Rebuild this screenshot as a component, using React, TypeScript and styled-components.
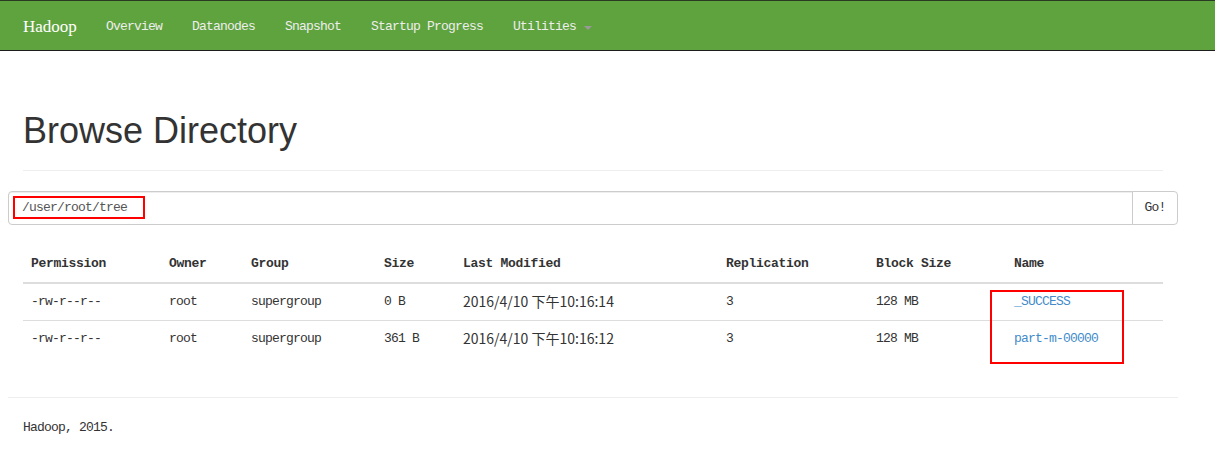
import styled, { createGlobalStyle } from "styled-components";

const mono = '"Liberation Mono", "DejaVu Sans Mono", monospace';
const cjk = '"Noto Sans CJK SC", "Noto Sans", sans-serif';

const GlobalStyle = createGlobalStyle`
    html, body {
        margin: 0;
        padding: 0;
        background: #fff;
    }
    body {
        font-family: ${mono};
        font-size: 13px;
        letter-spacing: -0.8px;
        line-height: 20px;
        color: #333;
    }
    * {
        box-sizing: border-box;
    }
`;

const Navbar = styled.nav`
    height: 51px;
    background: #5fa33e;
    border-top: 1px solid #2a3a22;
    border-bottom: 1px solid #1e1e1e;
`;

const NavInner = styled.div`
    width: 1170px;
    margin-left: 8px;
    height: 49px;
    padding-top: 3px;
    display: flex;
    align-items: center;
`;

const Brand = styled.a`
    width: 83px;
    padding: 0 15px;
    font-family: "Liberation Serif", serif;
    font-size: 17px;
    letter-spacing: 0;
    color: #fff;
    text-decoration: none;
`;

const NavList = styled.ul`
    list-style: none;
    margin: 0;
    padding: 0;
    display: flex;
`;

const NavLink = styled.a`
    display: flex;
    align-items: center;
    gap: 8px;
    padding: 0 15px;
    color: #eee;
    text-decoration: none;
    white-space: nowrap;
`;

const Caret = styled.span`
    width: 0;
    height: 0;
    border-left: 4px solid transparent;
    border-right: 4px solid transparent;
    border-top: 4px solid #999;
    margin-top: 2px;
`;

const Container = styled.div`
    width: 1170px;
    margin-left: 8px;
    padding: 20px 15px 0;
`;

const PageHeader = styled.div`
    margin: 40px 0 20px;
    padding-bottom: 9px;
    border-bottom: 1px solid #eee;
`;

const Title = styled.h1`
    margin: 0 0 10px;
    font-family: "Liberation Sans", Arial, sans-serif;
    font-size: 36px;
    font-weight: 500;
    letter-spacing: 0;
    line-height: 39.6px;
    color: #333;
`;

const Row = styled.div`
    margin: 0 -15px;
`;

const InputGroup = styled.div`
    position: relative;
    display: flex;
    height: 34px;
`;

const PathInput = styled.input`
    flex: 1;
    height: 34px;
    padding: 6px 13px;
    font-family: ${mono};
    font-size: 13px;
    letter-spacing: -0.8px;
    color: #555;
    border: 1px solid #ccc;
    border-radius: 4px 0 0 4px;
    box-shadow: inset 0 1px 1px rgba(0, 0, 0, 0.075);
    outline: none;
`;

const GoButton = styled.button`
    width: 46px;
    height: 34px;
    margin-left: -1px;
    padding: 6px 10px;
    font-family: ${mono};
    font-size: 13px;
    letter-spacing: -0.8px;
    color: #333;
    background: #fff;
    border: 1px solid #ccc;
    border-radius: 0 4px 4px 0;
`;

const Marker = styled.div<{ $left: number; $top: number; $width: number; $height: number }>`
    position: absolute;
    left: ${(p) => p.$left}px;
    top: ${(p) => p.$top}px;
    width: ${(p) => p.$width}px;
    height: ${(p) => p.$height}px;
    border: 2px solid #f00;
    pointer-events: none;
`;

const TableWrap = styled.div`
    position: relative;
    margin-top: 21px;
    margin-bottom: 40px;
`;

const Table = styled.table`
    width: 100%;
    border-collapse: collapse;
    table-layout: fixed;
`;

const Th = styled.th`
    text-align: left;
    padding: 8px;
    font-weight: bold;
    letter-spacing: -0.3px;
    border-bottom: 2px solid #ddd;
    color: #333;
`;

const Td = styled.td`
    padding: 8px;
    border-top: 1px solid #ddd;
    white-space: nowrap;
`;

const DateTd = styled(Td)`
    padding: 7px 8px 9px;
    font-family: ${cjk};
    font-size: 14px;
    letter-spacing: 0;
    line-height: 20px;
`;

const FileLink = styled.a`
    color: #428bca;
    text-decoration: none;
`;

const Footer = styled.div`
    margin: 0 -15px;

    hr {
        margin: 0 0 20px;
        border: 0;
        border-top: 1px solid #eee;
    }

    p {
        margin: 0 0 10px;
        padding: 0 15px;
    }
`;

const columns = [138, 82, 133, 79, 263, 150, 138, 157];
const headers = ["Permission", "Owner", "Group", "Size", "Last Modified", "Replication", "Block Size", "Name"];

const files = [
    { perm: "-rw-r--r--", owner: "root", group: "supergroup", size: "0 B", modified: "2016/4/10 下午10:16:14", repl: "3", block: "128 MB", name: "_SUCCESS" },
    { perm: "-rw-r--r--", owner: "root", group: "supergroup", size: "361 B", modified: "2016/4/10 下午10:16:12", repl: "3", block: "128 MB", name: "part-m-00000" },
];

const navItems = ["Overview", "Datanodes", "Snapshot", "Startup Progress"];

export default function App() {
    return (
        <>
            <GlobalStyle />
            <Navbar>
                <NavInner>
                    <Brand href="#">Hadoop</Brand>
                    <NavList>
                        {navItems.map((item) => (
                            <li key={item}>
                                <NavLink href="#">{item}</NavLink>
                            </li>
                        ))}
                        <li>
                            <NavLink href="#">
                                Utilities <Caret />
                            </NavLink>
                        </li>
                    </NavList>
                </NavInner>
            </Navbar>
            <Container>
                <PageHeader>
                    <Title>Browse Directory</Title>
                </PageHeader>
                <Row>
                    <InputGroup>
                        <PathInput defaultValue="/user/root/tree" />
                        <GoButton>Go!</GoButton>
                        <Marker $left={5} $top={5} $width={132} $height={23} />
                    </InputGroup>
                </Row>
                <TableWrap>
                    <Table>
                        <colgroup>
                            {columns.map((w, i) => (
                                <col key={i} style={{ width: w }} />
                            ))}
                        </colgroup>
                        <thead>
                            <tr>
                                {headers.map((h) => (
                                    <Th key={h}>{h}</Th>
                                ))}
                            </tr>
                        </thead>
                        <tbody>
                            {files.map((f) => (
                                <tr key={f.name}>
                                    <Td>{f.perm}</Td>
                                    <Td>{f.owner}</Td>
                                    <Td>{f.group}</Td>
                                    <Td>{f.size}</Td>
                                    <DateTd>{f.modified}</DateTd>
                                    <Td>{f.repl}</Td>
                                    <Td>{f.block}</Td>
                                    <Td>
                                        <FileLink href="#">{f.name}</FileLink>
                                    </Td>
                                </tr>
                            ))}
                        </tbody>
                    </Table>
                    <Marker $left={967} $top={44} $width={134} $height={74} />
                </TableWrap>
                <Footer>
                    <hr />
                    <p>Hadoop, 2015.</p>
                </Footer>
            </Container>
        </>
    );
}
